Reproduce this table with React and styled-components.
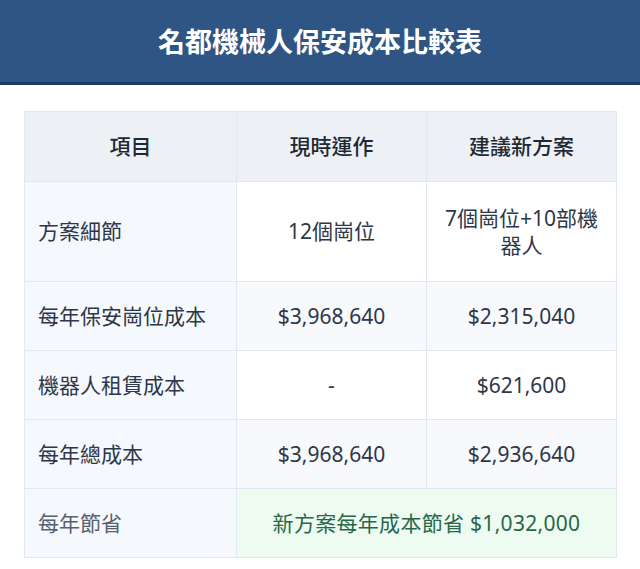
import React from 'react'
import styled, { createGlobalStyle } from 'styled-components'

const GlobalStyle = createGlobalStyle`
  html, body {
    margin: 0;
    padding: 0;
    background: #ffffff;
  }
  body {
    font-family: "Noto Sans", "Noto Sans CJK TC", sans-serif;
    color: #2d3748;
  }
`

const Page = styled.div`
  width: 640px;
  min-height: 569px;
  background: #ffffff;
`

const Banner = styled.header`
  height: 82px;
  background: #2e5583;
  border-bottom: 3px solid #1c3a63;
  display: flex;
  align-items: center;
  justify-content: center;
`

const Title = styled.h1`
  margin: 0 0 2px;
  color: #ffffff;
  font-size: 27px;
  font-weight: 700;
  letter-spacing: 0;
`

const Wrap = styled.div`
  padding: 26px 24px 0;
`

const Table = styled.table`
  width: 592px;
  border-collapse: collapse;
  table-layout: fixed;
  border: 1px solid #e2e8f0;
  font-size: 21px;
  line-height: 27px;
`

const Th = styled.th`
  height: 69px;
  padding: 0 12px;
  background: #edf1f6;
  border: 1px solid #e2e8f0;
  font-weight: 500;
  color: #1f2933;
  text-align: center;
`

const Row = styled.tr`
  background: ${p => (p.$striped ? '#f7f9fc' : '#ffffff')};
`

const Label = styled.td`
  height: ${p => (p.$tall ? '99px' : '68px')};
  padding: 0 12px 0 13px;
  background: #f5f8fc;
  border: 1px solid #e2e8f0;
  text-align: left;
  font-weight: 400;
  color: ${p => (p.$muted ? '#556070' : '#2d3748')};
`

const Cell = styled.td`
  padding: 0 12px;
  border: 1px solid #e2e8f0;
  text-align: center;
  font-weight: 400;
  color: #2d3748;
`

const Savings = styled.td`
  padding: 0 12px;
  background: #eefbf1;
  border: 1px solid #e2e8f0;
  text-align: center;
  color: #276749;
  font-weight: 400;
  letter-spacing: 0.3px;
`

const rows = [
  { label: '方案細節', now: '12個崗位', next: '7個崗位+10部機器人', tall: true },
  { label: '每年保安崗位成本', now: '$3,968,640', next: '$2,315,040' },
  { label: '機器人租賃成本', now: '-', next: '$621,600' },
  { label: '每年總成本', now: '$3,968,640', next: '$2,936,640' }
]

export default function App() {
  return (
    <Page>
      <GlobalStyle />
      <Banner>
        <Title>名都機械人保安成本比較表</Title>
      </Banner>
      <Wrap>
        <Table>
          <colgroup>
            <col style={{ width: 212 }} />
            <col style={{ width: 190 }} />
            <col style={{ width: 190 }} />
          </colgroup>
          <thead>
            <tr>
              <Th>項目</Th>
              <Th>現時運作</Th>
              <Th>建議新方案</Th>
            </tr>
          </thead>
          <tbody>
            {rows.map((r, i) => (
              <Row key={r.label} $striped={i % 2 === 1}>
                <Label $tall={r.tall}>{r.label}</Label>
                <Cell>{r.now}</Cell>
                <Cell>{r.next}</Cell>
              </Row>
            ))}
            <Row>
              <Label $muted>每年節省</Label>
              <Savings colSpan={2}>新方案每年成本節省 $1,032,000</Savings>
            </Row>
          </tbody>
        </Table>
      </Wrap>
    </Page>
  )
}
